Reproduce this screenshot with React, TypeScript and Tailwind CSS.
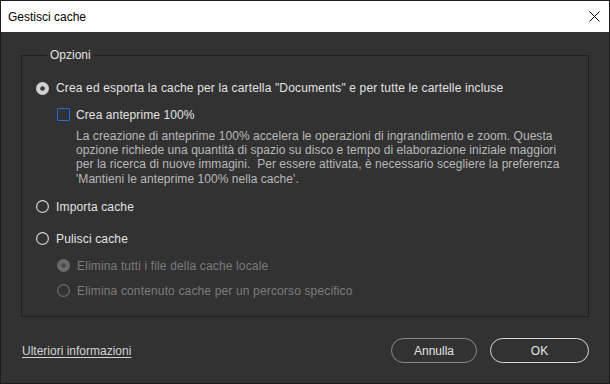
const font = { fontFamily: '"Liberation Sans", Arial, sans-serif' };

function Radio({ checked, disabled }: { checked?: boolean; disabled?: boolean }) {
  const ring = disabled ? '#6b6b6b' : '#d2d2d2';
  return (
    <svg width="13" height="13" viewBox="0 0 13 13" className="shrink-0">
      {checked ? (
        <>
          <circle cx="6.5" cy="6.5" r="6.5" fill={ring} />
          <circle cx="6.5" cy="6.5" r="2.3" fill={disabled ? '#4a4a4a' : '#3a3a3a'} />
        </>
      ) : (
        <circle cx="6.5" cy="6.5" r="5.9" fill="none" stroke={ring} strokeWidth="1.2" />
      )}
    </svg>
  );
}

function RadioRow({ label, checked, disabled }: { label: string; checked?: boolean; disabled?: boolean }) {
  return (
    <div className={`flex items-center h-4 gap-[7px] ${disabled ? 'text-[#7c7c7c]' : 'text-[#e2e2e2]'}`}>
      <Radio checked={checked} disabled={disabled} />
      <span className="whitespace-nowrap tracking-[0.15px]">{label}</span>
    </div>
  );
}

export default function App() {
  return (
    <div className="w-[610px] h-[384px] flex flex-col border border-[#1c1c1c] bg-[#323232] text-[12px]" style={font}>
      {/* title bar */}
      <div className="h-[31px] shrink-0 bg-white flex items-center justify-between pl-[7px] pr-[9px]">
        <span className="text-black">Gestisci cache</span>
        <svg width="11" height="11" viewBox="0 0 11 11">
          <path d="M0.5 0.5 L10.5 10.5 M10.5 0.5 L0.5 10.5" stroke="#000" strokeWidth="1" />
        </svg>
      </div>

      <div className="flex flex-col flex-1 px-5 pt-[15px]">
        <fieldset className="border border-[#1f1f1f] h-[270px] pl-[14px]">
          <legend className="ml-[11px] px-[3px] leading-4 text-[#e2e2e2]">Opzioni</legend>

          <div className="flex flex-col pt-[17px]">
            <RadioRow checked label={'Crea ed esporta la cache per la cartella "Documents" e per tutte le cartelle incluse'} />

            <div className="flex flex-col pl-[21px] mt-[11px]">
              <div className="flex items-center h-4 gap-[6px] text-[#e2e2e2]">
                <div className="w-[13px] h-[13px] self-start mt-px border border-[#1f6de6] rounded-[1px] shrink-0" />
                <span className="tracking-[0.1px]">Crea anteprime 100%</span>
              </div>
              <div className="pl-[19px] mt-[6px] leading-[14.2px] text-[#b9b9b9] whitespace-nowrap tracking-[0.05px]">
                <div>La creazione di anteprime 100% accelera le operazioni di ingrandimento e zoom. Questa</div>
                <div>opzione richiede una quantità di spazio su disco e tempo di elaborazione iniziale maggiori</div>
                <div>per la ricerca di nuove immagini.&nbsp; Per essere attivata, è necessario scegliere la preferenza</div>
                <div>'Mantieni le anteprime 100% nella cache'.</div>
              </div>
            </div>

            <div className="mt-[13px]">
              <RadioRow label="Importa cache" />
            </div>
            <div className="mt-4">
              <RadioRow label="Pulisci cache" />
            </div>
            <div className="flex flex-col pl-[21px] mt-[11px] gap-[9px]">
              <RadioRow checked disabled label="Elimina tutti i file della cache locale" />
              <RadioRow disabled label="Elimina contenuto cache per un percorso specifico" />
            </div>
          </div>
        </fieldset>

        <div className="flex items-center justify-between mt-[21px] pl-px">
          <a href="#" className="text-[#d4d4d4] underline underline-offset-2">Ulteriori informazioni</a>
          <div className="flex gap-[13px]">
            <button className="w-[86px] h-[25px] rounded-full border border-[#8c8c8c] text-[#e2e2e2]">Annulla</button>
            <button className="w-[99px] h-[25px] rounded-full border-[1.5px] border-[#d8d8d8] text-[#e8e8e8]">OK</button>
          </div>
        </div>
      </div>
    </div>
  );
}
